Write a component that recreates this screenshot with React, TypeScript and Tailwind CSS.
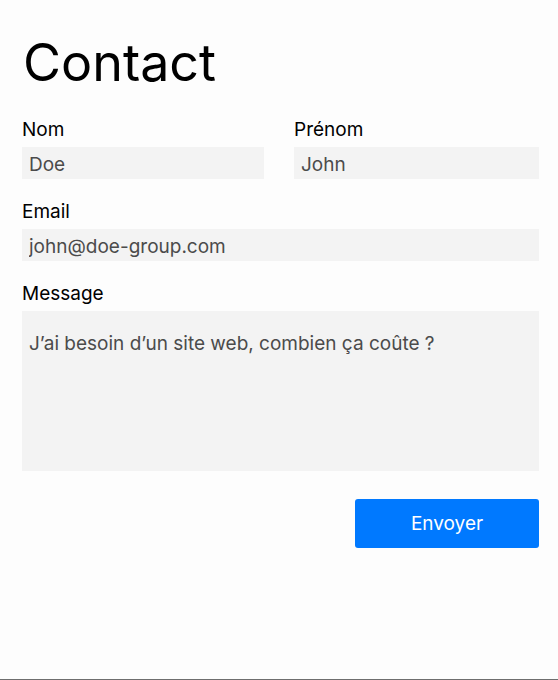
import { useState } from "react"

type FieldProps = {
	label: string
	value: string
	onChange: (value: string) => void
}

function Field({ label, value, onChange }: FieldProps) {
	return (
		<label className="flex flex-col">
			<span className="text-[19px] leading-[24px] text-black pt-[1px] mb-[5px]">{label}</span>
			<input
				type="text"
				value={value}
				onChange={(e) => onChange(e.target.value)}
				className="h-[32px] w-full bg-[#f3f3f3] px-[7px] pt-[2px] text-[19px] text-[#4b4b4b] outline-none"
			/>
		</label>
	)
}

function App() {
	const [nom, setNom] = useState("Doe")
	const [prenom, setPrenom] = useState("John")
	const [email, setEmail] = useState("john@doe-group.com")
	const [message, setMessage] = useState("J’ai besoin d’un site web, combien ça coûte ?")

	return (
		<div
			className="h-[680px] bg-[#fdfdfd] border-b border-[#6e6e6e] pl-[22px] pr-[19px] pt-[32px]"
			style={{ fontFamily: "Inter, 'Noto Sans', sans-serif" }}
		>
			<h1 className="text-[52px] leading-[61px] text-black mb-[24px] pl-[1px]">Contact</h1>

			<form className="flex flex-col" onSubmit={(e) => e.preventDefault()}>
				<div className="grid grid-cols-[242px_1fr] gap-[30px]">
					<Field label="Nom" value={nom} onChange={setNom} />
					<Field label="Prénom" value={prenom} onChange={setPrenom} />
				</div>

				<div className="mt-[20px]">
					<Field label="Email" value={email} onChange={setEmail} />
				</div>

				<label className="flex flex-col mt-[20px]">
					<span className="text-[19px] leading-[24px] text-black pt-[1px] mb-[5px]">Message</span>
					<textarea
						value={message}
						onChange={(e) => setMessage(e.target.value)}
						className="h-[160px] w-full resize-none bg-[#f3f3f3] px-[7px] pt-[21px] text-[19px] leading-[24px] text-[#4b4b4b] outline-none"
					/>
				</label>

				<div className="flex justify-end mt-[28px]">
					<button
						type="submit"
						className="h-[49px] w-[184px] rounded-[3px] bg-[#0079ff] pt-[2px] text-[19px] text-white"
					>
						Envoyer
					</button>
				</div>
			</form>
		</div>
	)
}

export default App
